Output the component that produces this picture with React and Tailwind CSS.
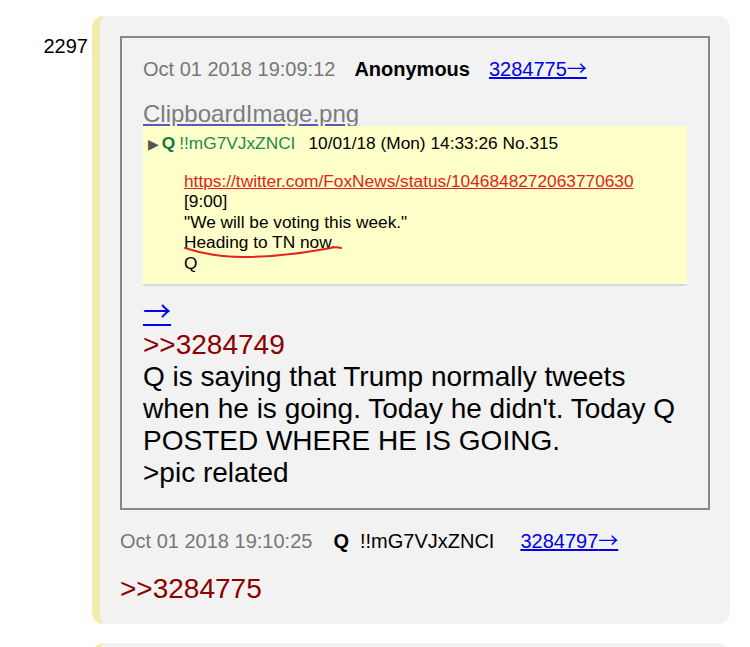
import React from 'react';

const font = "font-['Liberation_Sans',Arial,Helvetica,sans-serif]";
const arrowFont = "font-['Noto_Sans_CJK_JP','DejaVu_Sans',sans-serif] leading-[0.8]";

const PastedImage = () => (
  <div className="relative h-[160px] w-full border-b-2 border-[#d4d9e2] bg-[#ffffca] pl-[5px] pt-[7px] text-[17.3px] leading-[20.5px] text-black">
    <div className="flex items-baseline">
      <span className="font-['DejaVu_Sans',sans-serif] text-[14px] text-[#555]">▶</span>
      <span className="ml-[3px] font-bold text-[#117743]">Q</span>
      <span className="ml-[4px] text-[#228854]">!!mG7VJxZNCI</span>
      <span className="ml-[13px]">10/01/18 (Mon) 14:33:26 No.315</span>
    </div>
    <div className="ml-[36px] mt-4">
      <div className="text-[#e0221f] underline">https://twitter.com/FoxNews/status/1046848272063770630</div>
      <div>[9:00]</div>
      <div>"We will be voting this week."</div>
      <div>Heading to TN now.</div>
      <div>Q</div>
    </div>
    <svg className="pointer-events-none absolute left-0 top-0" width="544" height="160" viewBox="0 0 544 160">
      <path
        d="M42 122 C 60 128, 80 131, 100 131 C 130 131, 160 127, 182 123 C 188 122, 192 120, 198 122"
        fill="none"
        stroke="#e3231d"
        strokeWidth="2"
        strokeLinecap="round"
      />
    </svg>
  </div>
);

const QuotedPost = () => (
  <div className="border-2 border-[#888] px-[21px] pb-[19px] pt-5">
    <div className="flex h-[23px] items-baseline text-[20px] leading-[23px]">
      <span className="text-[#777]">Oct 01 2018 19:09:12</span>
      <span className="ml-[19px] font-bold text-black">Anonymous</span>
      <a href="#" className="ml-[19px] text-[#0000ee] underline">
        3284775<span className={arrowFont}>→</span>
      </a>
    </div>
    <div className="mt-5 text-[24px] leading-[25px]">
      <a href="#" className="text-[#7d7d7d] underline decoration-[#5a5ab4]">ClipboardImage.png</a>
    </div>
    <PastedImage />
    <div className="mt-[11px] text-[28px] leading-[32px]">
      <div className="h-[32px]">
        <a href="#" className="text-[#0000ee] underline">
          <span className={arrowFont}>→</span>
        </a>
      </div>
      <div className="text-[#8b0000]">&gt;&gt;3284749</div>
      <div className="text-black">
        Q is saying that Trump normally tweets when he is going. Today he didn't. Today Q POSTED WHERE HE IS GOING.
      </div>
      <div className="text-black">&gt;pic related</div>
    </div>
  </div>
);

export default function App() {
  return (
    <div className={`min-h-screen bg-white ${font}`}>
      <div className="flex pt-4">
        <div className="w-[92px] shrink-0 pr-1 pt-[19px] text-right text-[20px] leading-[23px] text-black">2297</div>
        <div className="w-[638px] rounded-xl border-l-8 border-[#efeda9] bg-[#f2f2f2] px-5 pb-[19px] pt-5">
          <QuotedPost />
          <div className="mt-5 flex h-[23px] items-baseline text-[20px] leading-[23px]">
            <span className="text-[#777]">Oct 01 2018 19:10:25</span>
            <span className="ml-[21px] font-bold text-black">Q</span>
            <span className="ml-[11px] text-black">!!mG7VJxZNCI</span>
            <a href="#" className="ml-[26px] text-[#0000ee] underline">
              3284797<span className={arrowFont}>→</span>
            </a>
          </div>
          <div className="mt-5 text-[28px] leading-[32px] text-[#8b0000]">&gt;&gt;3284775</div>
        </div>
      </div>
      <div className="mt-[19px] flex">
        <div className="w-[92px] shrink-0" />
        <div className="h-[120px] w-[638px] rounded-xl border-l-8 border-[#efeda9] bg-[#f2f2f2]" />
      </div>
    </div>
  );
}
